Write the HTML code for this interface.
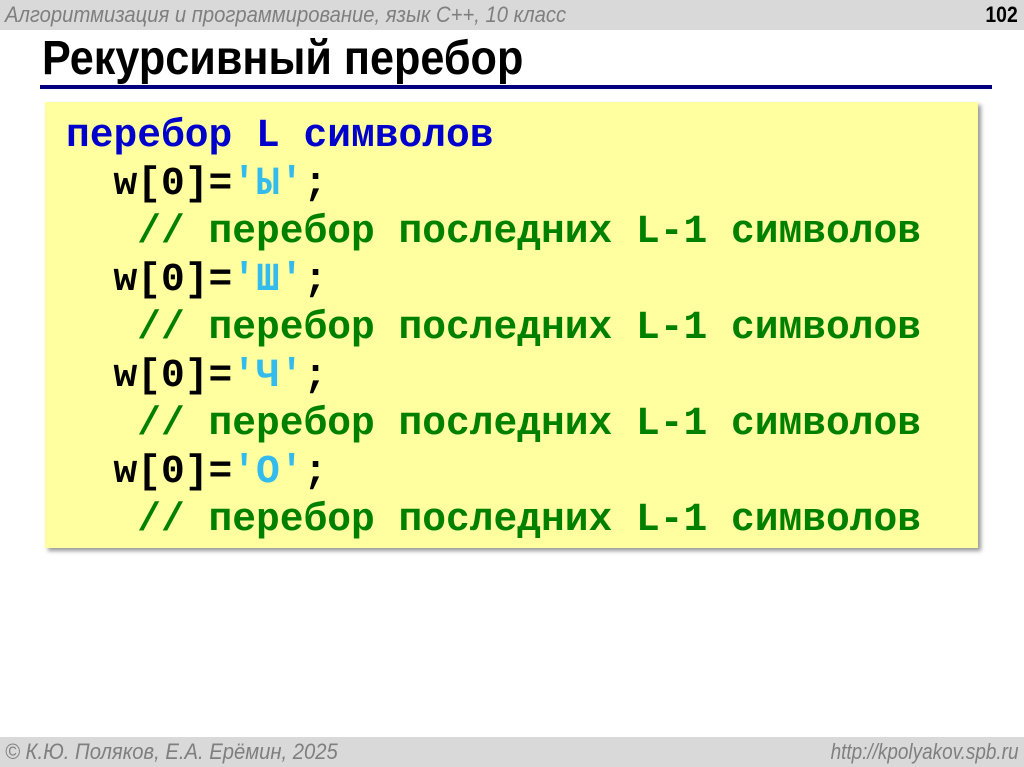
<!DOCTYPE html>
<html><head><meta charset="utf-8"><style>
body{margin:0;width:1024px;height:767px;background:#fff;position:relative;overflow:hidden;font-family:"Liberation Sans",sans-serif}
.top{position:absolute;left:0;top:0;width:1024px;height:30px;background:#d9d9d9}
.top .l{position:absolute;left:5px;top:2px;font-size:22px;font-style:italic;color:#7f7f7f;transform:scaleX(0.92);transform-origin:left;white-space:nowrap}
.top .r{position:absolute;right:6px;top:2px;font-size:22px;font-weight:bold;color:#000;transform:scaleX(0.88);transform-origin:right}
.title{position:absolute;left:42px;top:31px;font-size:48px;font-weight:bold;color:#000;transform:scaleX(0.9);transform-origin:left;white-space:nowrap}
.line{position:absolute;left:40px;top:85px;width:952px;height:4px;background:#00007f}
.box{position:absolute;left:45px;top:102px;width:933px;height:446px;background:#ffff9f;box-shadow:3px 3px 4px #999}
pre{position:absolute;left:66px;top:112px;margin:0;font-family:"Liberation Mono",monospace;font-weight:bold;font-size:39.6px;line-height:48px;color:#000}
.b{color:#0000cc}.g{color:#008000}.c{color:#33bbee}
.bot{position:absolute;left:0;top:737px;width:1024px;height:30px;background:#d9d9d9;color:#7f7f7f;font-style:italic;font-size:22px}
.bot .l{position:absolute;left:5px;top:2px;transform:scaleX(0.92);transform-origin:left;white-space:nowrap}
.bot .r{position:absolute;right:6px;top:2px;transform:scaleX(0.86);transform-origin:right;white-space:nowrap}
</style></head><body>
<div class="top"><span class="l">Алгоритмизация и программирование, язык С++, 10 класс</span><span class="r">102</span></div>
<div class="title">Рекурсивный перебор</div>
<div class="line"></div>
<div class="box"></div>
<pre><span class="b">перебор L символов</span>
  w[0]=<span class="c">'Ы'</span>;
   <span class="g">// перебор последних L-1 символов</span>
  w[0]=<span class="c">'Ш'</span>;
   <span class="g">// перебор последних L-1 символов</span>
  w[0]=<span class="c">'Ч'</span>;
   <span class="g">// перебор последних L-1 символов</span>
  w[0]=<span class="c">'О'</span>;
   <span class="g">// перебор последних L-1 символов</span></pre>
<div class="bot"><span class="l">© К.Ю. Поляков, Е.А. Ерёмин, 2025</span><span class="r">http://kpolyakov.spb.ru</span></div>
</body></html>
